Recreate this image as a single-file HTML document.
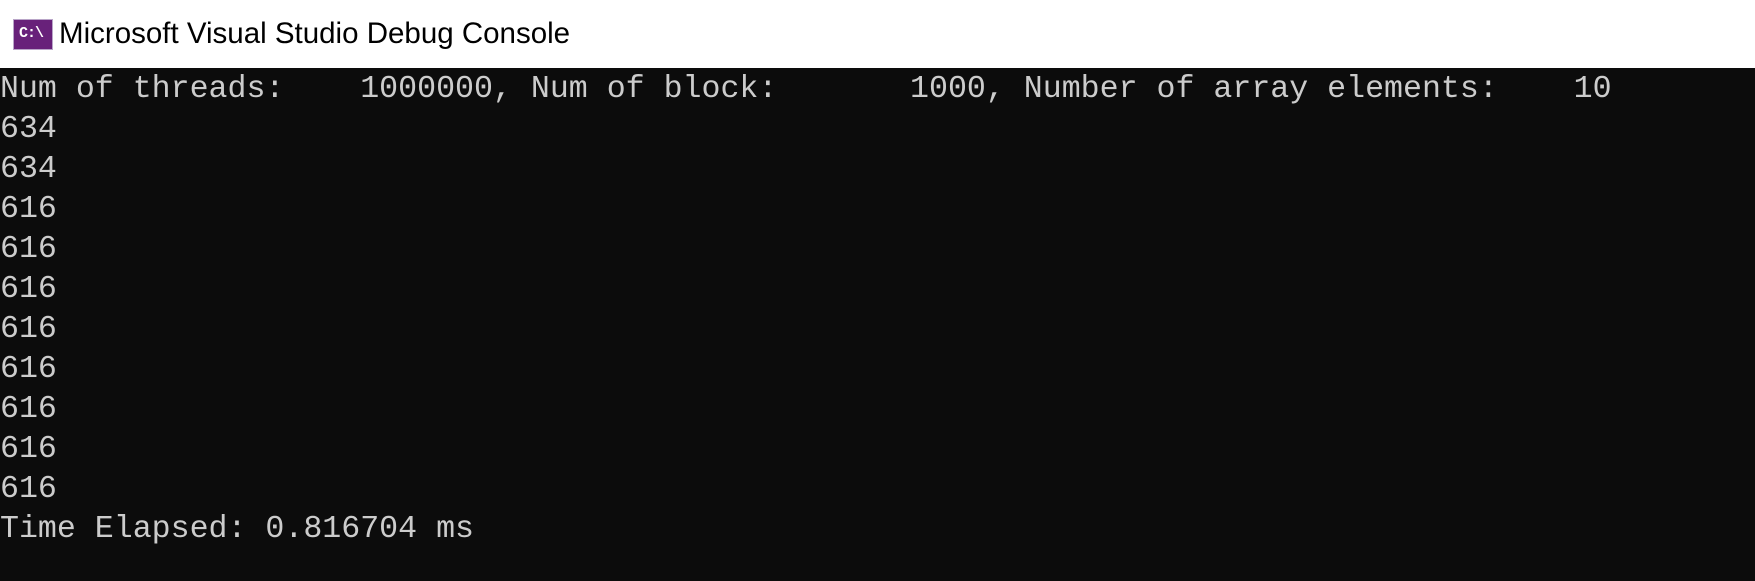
<!DOCTYPE html>
<html><head><style>
html,body{margin:0;padding:0;width:1755px;height:581px;overflow:hidden;background:#0c0c0c}
#tb{position:absolute;left:0;top:0;width:1755px;height:68px;background:#fff}
#ic{position:absolute;left:13px;top:19px;width:40px;height:31px;background:#68217a;border:1px solid #b9a5c8;box-sizing:border-box}
#ic span{position:absolute;left:5px;top:5px;color:#fff;font:bold 15px "Liberation Mono",monospace;letter-spacing:-1px}
#tt{position:absolute;left:59px;top:17px;font:29.5px "Liberation Sans","DejaVu Sans",sans-serif;color:#000}
pre{position:absolute;left:0;top:70px;margin:0;font:31.6px/40px "Liberation Mono","DejaVu Sans Mono",monospace;color:#cccccc}
</style></head><body>
<div id="tb"><div id="ic"><span>C:\</span></div><div id="tt">Microsoft Visual Studio Debug Console</div></div>
<pre>Num of threads:    1000000, Num of block:       1000, Number of array elements:    10
634
634
616
616
616
616
616
616
616
616
Time Elapsed: 0.816704 ms</pre>
</body></html>
